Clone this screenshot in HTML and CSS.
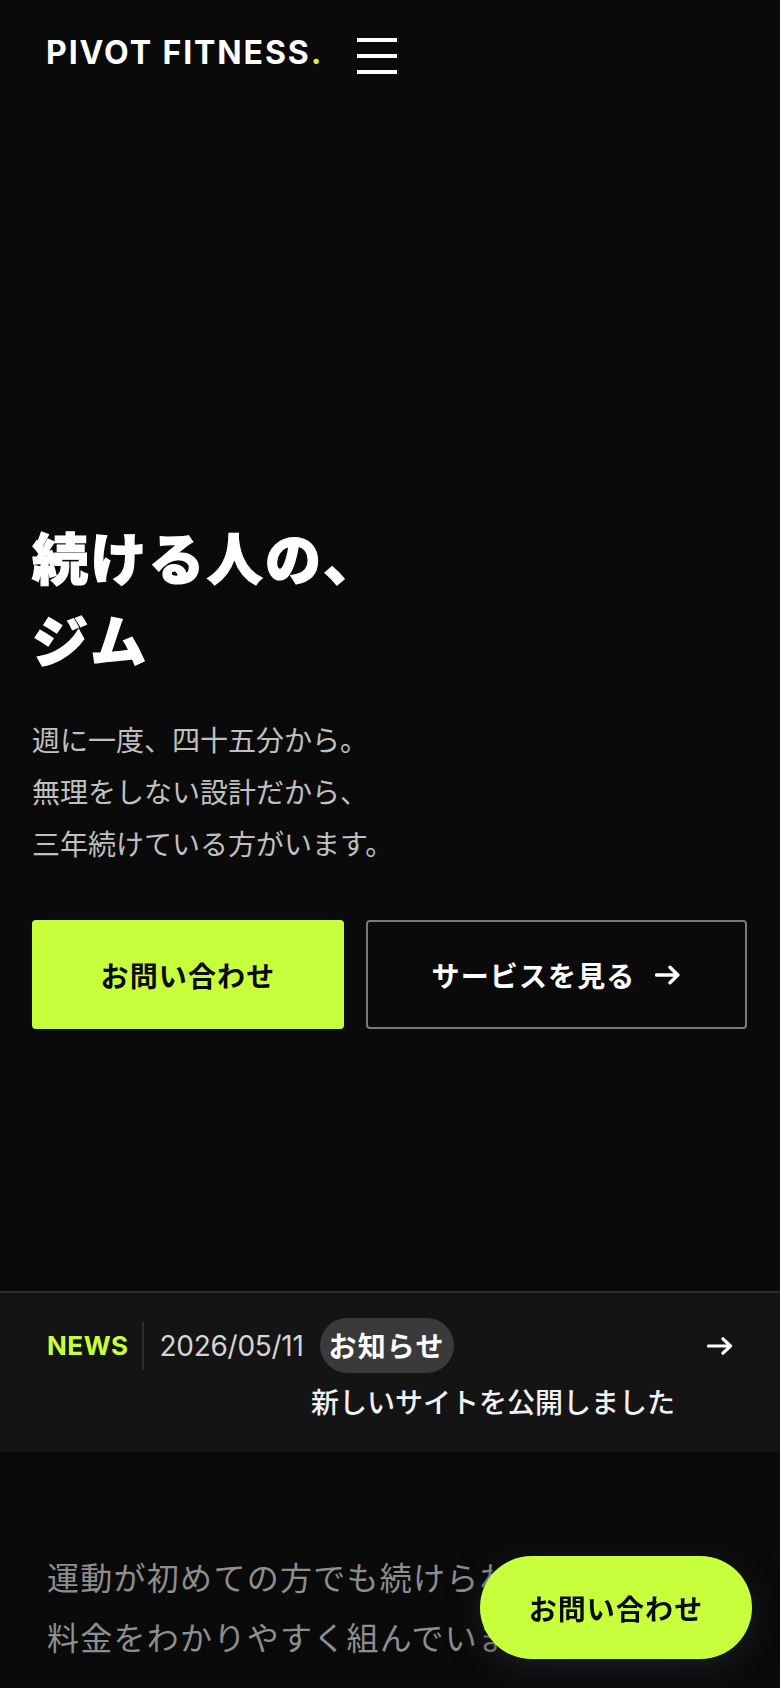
FILE: index.html
```html
<!DOCTYPE html>
<html lang="ja">
<head>
<meta charset="utf-8">
<title>PIVOT FITNESS</title>
<link rel="stylesheet" href="styles.css">
</head>
<body>
<header class="site-header">
  <a class="logo" href="#">PIVOT FITNESS<span class="logo-dot">.</span></a>
  <button class="menu-btn" type="button" aria-label="メニュー"><span></span><span></span><span></span></button>
</header>

<section class="hero">
  <h1 class="hero-title">続ける人の、<br>ジム</h1>
  <p class="hero-lead">週に一度、四十五分から。<br>無理をしない設計だから、<br>三年続けている方がいます。</p>
  <div class="hero-actions">
    <a class="btn btn-primary" href="#">お問い合わせ</a>
    <a class="btn btn-outline" href="#"><span>サービスを見る</span><svg class="btn-arrow" viewBox="0 0 26 20" width="26" height="20" aria-hidden="true"><path d="M1.5 10H23M15 2.2L22.8 10L15 17.8" fill="none" stroke="currentColor" stroke-width="3.4" stroke-linecap="round" stroke-linejoin="round"/></svg></a>
  </div>
</section>

<a class="news" href="#">
  <span class="news-label">NEWS</span>
  <div class="news-body">
    <time class="news-date">2026/05/11</time>
    <span class="news-tag">お知らせ</span>
    <span class="news-title">新しいサイトを公開しました</span>
  </div>
  <svg class="news-arrow" viewBox="0 0 26 18" width="26" height="18" aria-hidden="true"><path d="M1.5 9H23.5M16 1.8L23.5 9L16 16.2" fill="none" stroke="currentColor" stroke-width="3.2" stroke-linecap="round" stroke-linejoin="round"/></svg>
</a>

<section class="intro">
  <p class="intro-text">運動が初めての方でも続けられるように、<br>料金をわかりやすく組んでいます。</p>
</section>

<a class="float-cta" href="#">お問い合わせ</a>
</body>
</html>
```

FILE: styles.css
```css
* {
  box-sizing: border-box;
}

html, body {
  margin: 0;
  padding: 0;
}

body {
  background: #0a0a0a;
  color: #ffffff;
  font-family: Inter, "Noto Sans CJK JP", "Noto Sans", sans-serif;
}

a {
  color: inherit;
  text-decoration: none;
}

/* Header */
.site-header {
  height: 108px;
  padding: 0 46px;
  display: flex;
  align-items: center;
  gap: 34px;
}

.logo {
  font-family: Inter, "Liberation Sans", sans-serif;
  font-weight: 700;
  font-size: 32px;
  letter-spacing: 0.06em;
  line-height: 1;
  color: #ffffff;
  margin-top: -2px;
}

.logo-dot {
  color: #c8ff3c;
}

.menu-btn {
  width: 40px;
  height: 36px;
  padding: 0;
  border: 0;
  background: transparent;
  display: flex;
  flex-direction: column;
  justify-content: space-between;
  margin-top: 4px;
}

.menu-btn span {
  display: block;
  height: 4px;
  width: 100%;
  background: #ffffff;
}

/* Hero */
.hero {
  padding: 407px 33px 262px 32px;
}

.hero-title {
  margin: 0;
  font-family: "Noto Sans CJK JP", sans-serif;
  font-weight: 900;
  font-size: 56px;
  line-height: 82px;
  letter-spacing: 0.04em;
  color: #ffffff;
  -webkit-text-stroke: 1.2px #ffffff;
}

.hero-lead {
  margin: 34px 0 0;
  font-family: "Noto Sans CJK JP", sans-serif;
  font-weight: 400;
  font-size: 28px;
  line-height: 52px;
  color: #c0c0c0;
}

.hero-actions {
  margin-top: 51px;
  display: flex;
  gap: 22px;
}

.btn {
  flex: 1 1 auto;
  height: 109px;
  padding: 0 24px;
  display: flex;
  align-items: center;
  justify-content: center;
  gap: 20px;
  font-family: "Noto Sans CJK JP", sans-serif;
  font-weight: 700;
  font-size: 28px;
  letter-spacing: 0.04em;
  border-radius: 4px;
}

.btn-primary {
  padding: 0 29px;
  background: #c8ff3c;
  color: #0a0a0a;
}

.btn-outline {
  border: 2px solid #7a7a7a;
  color: #ffffff;
}

.btn-arrow {
  display: block;
  flex: none;
}

/* News */
.news {
  display: flex;
  align-items: flex-start;
  gap: 32px;
  padding: 25px 47px 31px;
  background: #141414;
  border-top: 2px solid #2c2c2c;
}

.news-label {
  flex: none;
  height: 55px;
  display: flex;
  align-items: center;
  gap: 13px;
  margin-right: -16px;
  font-family: Inter, "Liberation Sans", sans-serif;
  font-weight: 700;
  font-size: 26px;
  letter-spacing: 0.02em;
  color: #c8ff3c;
}

.news-label::after {
  content: "";
  display: block;
  width: 2px;
  height: 48px;
  background: #2e2e2e;
}

.news-body {
  flex: 1 1 auto;
  display: flex;
  flex-wrap: wrap;
  align-items: center;
  column-gap: 16px;
  row-gap: 8px;
}

.news-date {
  font-family: Inter, "Liberation Sans", sans-serif;
  font-weight: 400;
  font-size: 28px;
  letter-spacing: -0.01em;
  color: #d4d4d4;
}

.news-tag {
  height: 55px;
  line-height: 55px;
  padding: 0 9px;
  border-radius: 28px;
  background: #3a3a3a;
  font-family: "Noto Sans CJK JP", sans-serif;
  font-weight: 700;
  font-size: 28px;
  letter-spacing: 0.04em;
  color: #ffffff;
}

.news-title {
  margin-left: auto;
  font-family: "Noto Sans CJK JP", sans-serif;
  font-weight: 500;
  font-size: 28px;
  line-height: 40px;
  color: #f2f2f2;
}

.news-arrow {
  flex: none;
  display: block;
  margin-top: 19px;
  color: #ffffff;
}

/* Intro */
.intro {
  padding: 94px 47px 80px;
}

.intro-text {
  margin: 0;
  font-family: "Noto Sans CJK JP", sans-serif;
  font-weight: 400;
  font-size: 32px;
  line-height: 60px;
  letter-spacing: 0.04em;
  color: #8e8e8e;
}

/* Floating CTA */
.float-cta {
  position: fixed;
  right: 28px;
  bottom: 29px;
  width: 272px;
  height: 103px;
  border-radius: 52px;
  background: #c8ff3c;
  color: #0a0a0a;
  display: flex;
  align-items: center;
  justify-content: center;
  font-family: "Noto Sans CJK JP", sans-serif;
  font-weight: 700;
  font-size: 28px;
  letter-spacing: 0.04em;
  box-shadow: 0 8px 32px rgba(40, 46, 56, 0.55);
}
```
